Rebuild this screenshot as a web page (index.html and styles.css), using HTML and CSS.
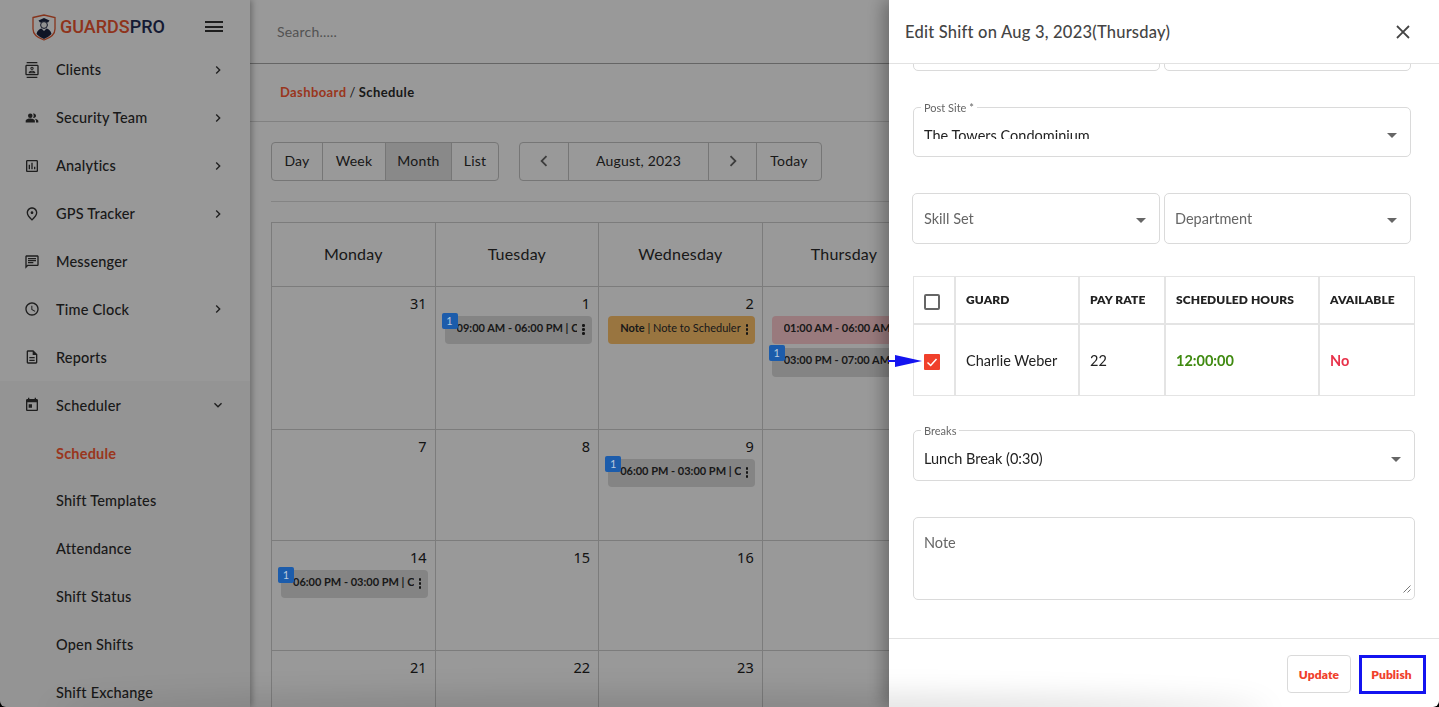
FILE: index.html
```html
<!DOCTYPE html>
<html lang="en">
<head>
<meta charset="utf-8">
<title>Schedule</title>
<link rel="stylesheet" href="styles.css">
</head>
<body>
<div class="app">
  <aside class="sidebar">
    <div class="brand">
      <svg class="logo" viewBox="0 0 24 27"><path d="M1 3.500 12 1l11 2.500V15c0 5-5 9-11 11C6 24 1 20 1 15z" fill="#fff" stroke="#e0572f" stroke-width="1.300"/><path d="M6.500 6.500 12 4l5.500 2.500-1.500 2H8z" fill="#1c2340"/><circle cx="12" cy="11" r="3.400" fill="#f2f2f2" stroke="#1c2340"/><path d="M4.500 20c.5-3.500 3-5 5-5.500L12 17l2.500-2.500c2 .5 4.500 2 5 5.500-2 2.300-5 4-7.500 5-2.500-1-5.500-2.700-7.500-5z" fill="#1c2340"/></svg>
      <span class="wordmark"><span class="wm-a">GUARDS</span><span class="wm-b">PRO</span></span>
      <span class="burger"><i></i><i></i><i></i></span>
    </div>
    <nav class="nav">
      <a class="item"><svg class="ico" viewBox="0 0 24 24"><path d="M20 0H4v2h16V0zM4 24h16v-2H4v2zM20 4H4c-1.100 0-2 .9-2 2v12c0 1.100.9 2 2 2h16c1.100 0 2-.9 2-2V6c0-1.100-.9-2-2-2zm0 14H4V6h16v12zm-8-6c1.380 0 2.500-1.120 2.500-2.500S13.380 7 12 7 9.500 8.120 9.500 9.500 10.620 12 12 12zm0-3.500c.55 0 1 .45 1 1s-.45 1-1 1-1-.45-1-1 .45-1 1-1zm5 7.490c0-2.090-3.310-2.990-5-2.990s-5 .9-5 2.990V17h10v-1.010zM8.810 15.500c.61-.52 2.030-1 3.190-1 1.170 0 2.590.48 3.200 1H8.810z"/></svg><span class="lbl">Clients</span><svg class="chev" viewBox="0 0 24 24"><path d="M10 6 8.590 7.410 13.170 12l-4.580 4.590L10 18l6-6z"/></svg></a>
      <a class="item"><svg class="ico team" viewBox="0 0 24 24"><circle cx="9" cy="8" r="4"/><path d="M15 12c2.210 0 4-1.790 4-4s-1.790-4-4-4c-.47 0-.91.1-1.330.24C14.500 5.270 15 6.580 15 8s-.5 2.730-1.330 3.760c.42.14.86.24 1.330.24zM9 13c-2.670 0-8 1.340-8 4v3h16v-3c0-2.660-5.330-4-8-4zM16.670 13.130C18.040 14.060 19 15.320 19 17v3h4v-3c0-2.180-3.570-3.470-6.330-3.870z"/></svg><span class="lbl">Security Team</span><svg class="chev" viewBox="0 0 24 24"><path d="M10 6 8.590 7.410 13.170 12l-4.580 4.590L10 18l6-6z"/></svg></a>
      <a class="item"><svg class="ico" viewBox="0 0 24 24"><path d="M9 17H7v-7h2v7zm4 0h-2V7h2v10zm4 0h-2v-4h2v4zm2 2H5V5h14v14zm0-16H5c-1.100 0-2 .9-2 2v14c0 1.100.9 2 2 2h14c1.100 0 2-.9 2-2V5c0-1.100-.9-2-2-2z"/></svg><span class="lbl">Analytics</span><svg class="chev" viewBox="0 0 24 24"><path d="M10 6 8.590 7.410 13.170 12l-4.580 4.590L10 18l6-6z"/></svg></a>
      <a class="item"><svg class="ico" viewBox="0 0 24 24"><path d="M12 12c-1.100 0-2-.9-2-2s.9-2 2-2 2 .9 2 2-.9 2-2 2zm6-1.800C18 6.570 15.350 4 12 4s-6 2.570-6 6.200c0 2.340 1.950 5.440 6 9.140 4.050-3.700 6-6.800 6-9.140zM12 2c4.200 0 8 3.220 8 8.200 0 3.320-2.670 7.250-8 11.800-5.330-4.550-8-8.480-8-11.800C4 5.220 7.800 2 12 2z"/></svg><span class="lbl">GPS Tracker</span><svg class="chev" viewBox="0 0 24 24"><path d="M10 6 8.590 7.410 13.170 12l-4.580 4.590L10 18l6-6z"/></svg></a>
      <a class="item"><svg class="ico" viewBox="0 0 24 24"><path d="M20 2H4c-1.100 0-2 .9-2 2v18l4-4h14c1.100 0 2-.9 2-2V4c0-1.100-.9-2-2-2zm0 14H5.170L4 17.170V4h16v12zM6 12h8v2H6zM6 9h12v2H6zM6 6h12v2H6z"/></svg><span class="lbl">Messenger</span></a>
      <a class="item"><svg class="ico" viewBox="0 0 24 24"><path d="M11.990 2C6.470 2 2 6.480 2 12s4.470 10 9.990 10C17.520 22 22 17.520 22 12S17.520 2 11.990 2zM12 20c-4.420 0-8-3.580-8-8s3.580-8 8-8 8 3.580 8 8-3.580 8-8 8zm.5-13H11v6l5.250 3.150.75-1.230-4.500-2.670z"/></svg><span class="lbl">Time Clock</span><svg class="chev" viewBox="0 0 24 24"><path d="M10 6 8.590 7.410 13.170 12l-4.580 4.590L10 18l6-6z"/></svg></a>
      <a class="item"><svg class="ico" viewBox="0 0 24 24"><path d="M8 16h8v2H8zm0-4h8v2H8zm6-10H6c-1.100 0-2 .9-2 2v16c0 1.100.89 2 1.990 2H18c1.100 0 2-.9 2-2V8l-6-6zm4 18H6V4h7v5h5v11z"/></svg><span class="lbl">Reports</span></a>
      <div class="group">
        <a class="item"><svg class="ico" viewBox="0 0 24 24"><path d="M7 11h5v5H7zM16 1v2H8V1H6v2H5c-1.110 0-1.990.9-1.990 2L3 19c0 1.100.89 2 2 2h14c1.100 0 2-.9 2-2V5c0-1.100-.9-2-2-2h-1V1h-2zm3 18H5V8h14v11z"/></svg><span class="lbl">Scheduler</span><svg class="chev" viewBox="0 0 24 24"><path d="M16.590 8.590 12 13.170 7.410 8.590 6 10l6 6 6-6z"/></svg></a>
        <a class="item sub active"><span class="lbl">Schedule</span></a>
        <a class="item sub"><span class="lbl">Shift Templates</span></a>
        <a class="item sub"><span class="lbl">Attendance</span></a>
        <a class="item sub"><span class="lbl">Shift Status</span></a>
        <a class="item sub"><span class="lbl">Open Shifts</span></a>
        <a class="item sub"><span class="lbl">Shift Exchange</span></a>
      </div>
    </nav>
  </aside>
  <main class="main">
    <header class="topbar"><span class="search">Search.....</span></header>
    <div class="crumbs"><b class="crumb-link">Dashboard</b><span class="crumb-sep">/</span><b>Schedule</b></div>
    <section class="content">
      <div class="toolbar">
        <div class="btns">
          <span class="btn w-day">Day</span><span class="btn w-week">Week</span><span class="btn w-month on">Month</span><span class="btn w-list">List</span>
        </div>
        <div class="btns">
          <span class="btn w-prev"><svg class="nav-ico" viewBox="0 0 24 24"><path d="M15.410 7.410 14 6l-6 6 6 6 1.410-1.410L10.830 12z"/></svg></span><span class="btn w-label">August, 2023</span><span class="btn w-next"><svg class="nav-ico" viewBox="0 0 24 24"><path d="M10 6 8.590 7.410 13.170 12l-4.580 4.590L10 18l6-6z"/></svg></span><span class="btn w-today">Today</span>
        </div>
      </div>
      <hr class="rule">
      <div class="cal">
        <div class="dow">Monday</div><div class="dow">Tuesday</div><div class="dow">Wednesday</div><div class="dow">Thursday</div><div class="dow">Friday</div><div class="dow">Saturday</div><div class="dow">Sunday</div>

        <div class="day"><span class="num">31</span></div>
        <div class="day"><span class="num">1</span>
          <div class="ev grey"><span class="badge">1</span><span class="ev-text">09:00 AM - 06:00 PM | Charlie Weber</span><span class="dots"><i></i><i></i><i></i></span></div>
        </div>
        <div class="day"><span class="num">2</span>
          <div class="ev note"><span class="ev-text"><b>Note</b> | Note to Scheduler</span><span class="dots"><i></i><i></i><i></i></span></div>
        </div>
        <div class="day"><span class="num">3</span>
          <div class="ev pink"><span class="ev-text">01:00 AM - 06:00 AM | Charlie Weber</span></div>
          <div class="ev grey tall"><span class="badge">1</span><span class="ev-text">03:00 PM - 07:00 AM | Charlie Weber</span></div>
        </div>
        <div class="day"><span class="num">4</span></div><div class="day"><span class="num">5</span></div><div class="day"><span class="num">6</span></div>

        <div class="day"><span class="num">7</span></div>
        <div class="day"><span class="num">8</span></div>
        <div class="day"><span class="num">9</span>
          <div class="ev grey"><span class="badge">1</span><span class="ev-text">06:00 PM - 03:00 PM | Charlie Weber</span><span class="dots"><i></i><i></i><i></i></span></div>
        </div>
        <div class="day"><span class="num">10</span></div><div class="day"><span class="num">11</span></div><div class="day"><span class="num">12</span></div><div class="day"><span class="num">13</span></div>

        <div class="day"><span class="num">14</span>
          <div class="ev grey"><span class="badge">1</span><span class="ev-text">06:00 PM - 03:00 PM | Charlie Weber</span><span class="dots"><i></i><i></i><i></i></span></div>
        </div>
        <div class="day"><span class="num">15</span></div>
        <div class="day"><span class="num">16</span></div>
        <div class="day"><span class="num">17</span></div><div class="day"><span class="num">18</span></div><div class="day"><span class="num">19</span></div><div class="day"><span class="num">20</span></div>

        <div class="day"><span class="num">21</span></div>
        <div class="day"><span class="num">22</span></div>
        <div class="day"><span class="num">23</span></div>
        <div class="day"><span class="num">24</span></div><div class="day"><span class="num">25</span></div><div class="day"><span class="num">26</span></div><div class="day"><span class="num">27</span></div>
      </div>
    </section>
  </main>
</div>

<div class="scrim"></div>

<aside class="drawer">
  <header class="d-head">
    <h2 class="d-title">Edit Shift on Aug 3, 2023(Thursday)</h2>
    <svg class="d-close" viewBox="0 0 14 14"><path d="M1 1l12 12M13 1 1 13"/></svg>
  </header>
  <div class="d-body">
    <div class="row-top"><div class="box half"></div><div class="box half"></div></div>
    <div class="box post">
      <span class="float">Post Site *</span>
      <span class="clip"><span class="value">The Towers Condominium</span></span>
      <span class="caret"></span>
    </div>
    <div class="row-two">
      <div class="box half skill"><span class="hint">Skill Set</span><span class="caret low"></span></div>
      <div class="box half"><span class="hint">Department</span><span class="caret low"></span></div>
    </div>
    <table class="guards">
      <thead>
        <tr><th class="c1"><span class="check"></span></th><th class="c2">GUARD</th><th class="c3">PAY RATE</th><th class="c4">SCHEDULED HOURS</th><th class="c5">AVAILABLE</th></tr>
      </thead>
      <tbody>
        <tr><td><span class="check checked"><svg viewBox="0 0 16 16"><path d="M3.500 8.500 6.700 11.500 12.500 5"/></svg></span></td><td>Charlie Weber</td><td>22</td><td class="hours">12:00:00</td><td class="no">No</td></tr>
      </tbody>
    </table>
    <div class="box wide breaks">
      <span class="float">Breaks</span>
      <span class="value">Lunch Break (0:30)</span>
      <span class="caret"></span>
    </div>
    <div class="box wide note-box">
      <span class="hint">Note</span>
      <svg class="grip" viewBox="0 0 8 8"><path d="M7.500 .5 .5 7.500M7.500 4.500l-3 3"/></svg>
    </div>
  </div>
  <footer class="d-foot">
    <span class="act">Update</span>
    <span class="act hl">Publish</span>
  </footer>
</aside>

<svg class="pointer" viewBox="0 0 34 14"><path d="M0 6h7L7 1l27 6-27 6V8H0z" fill="#1414f0"/></svg>
<div class="edge-fade"></div>
<div class="frame"></div>
</body>
</html>
```
FILE: styles.css
```css
* { box-sizing: border-box; }
html, body { margin: 0; height: 100%; overflow: hidden; }
body { font-family: "Lato", "Open Sans", sans-serif; font-size: 14.5px; letter-spacing: .2px; color: #2b2b2b; background: #fff; }
a { color: inherit; }

.app { display: flex; height: 707px; overflow: hidden; }

.sidebar { width: 250px; flex: none; background: #fdfdfd; box-shadow: 2px 0 6px rgba(0,0,0,.3); z-index: 2; overflow: hidden; display: flex; flex-direction: column; }
.brand { height: 46px; flex: none; display: flex; align-items: center; padding: 7px 27px 0 32px; }
.logo { width: 24px; height: 27px; flex: none; margin-top: 1px; }
.wordmark { font-family: "Roboto", sans-serif; font-size: 18px; font-weight: 500; letter-spacing: 0; margin-left: 4px; line-height: 1; }
.wm-a { color: #ef5530; }
.wm-b { color: #232c55; }
.burger { margin-left: auto; width: 18px; display: flex; flex-direction: column; gap: 2.500px; }
.burger i { display: block; height: 2px; background: #333; }
.nav { flex: none; }
.item { display: flex; align-items: center; height: 47.900px; padding: 0 24px; font-weight: 500; }
.ico { width: 16px; height: 16px; fill: #333; flex: none; margin-right: 16px; }
.team { transform: scale(.86); }
.chev { width: 16px; height: 16px; fill: #333; margin-left: auto; flex: none; }
.group { background: #f7f7f7; }
.sub { padding-left: 56px; }
.active { color: #ff5a33; font-weight: 700; }

.main { flex: 1; min-width: 0; display: flex; flex-direction: column; }
.topbar { height: 64px; flex: none; display: flex; align-items: center; padding-left: 27px; border-bottom: 1px solid #a9a9a9; }
.search { color: #8a8a8a; font-size: 14px; }
.crumbs { height: 58px; flex: none; display: flex; align-items: center; gap: 3px; padding: 0 0 2px 30px; border-bottom: 1px solid #d8d8d8; font-size: 13px; letter-spacing: .4px; }
.crumb-link { color: #ff5a33; }
.content { padding: 20px 0 0 21px; flex: 1; min-height: 0; }
.toolbar { display: flex; gap: 20px; }
.btns { display: flex; height: 39px; border: 1px solid #c5c5c5; border-radius: 4px; overflow: hidden; }
.btn { display: flex; align-items: center; justify-content: center; border-right: 1px solid #c5c5c5; font-size: 14px; padding-bottom: 2px; }
.btn:last-child { border-right: 0; }
.w-day { width: 51px; } .w-week { width: 63px; } .w-month { width: 66px; } .w-list { width: 46px; }
.w-prev { width: 49px; } .w-label { width: 140px; } .w-next { width: 48px; } .w-today { width: 64px; }
.on { background: #e4e4e4; }
.nav-ico { width: 22px; height: 22px; fill: #666; }
.rule { margin: 20px 0 20px; border: 0; border-top: 1px solid #dcdcdc; }
.cal { display: grid; width: 1146px; grid-template-columns: repeat(7, minmax(0, 1fr)); grid-template-rows: 64px 143px 111px 110px 60px; border-top: 1px solid #cfcfcf; border-left: 1px solid #cfcfcf; }
.dow { display: flex; align-items: center; justify-content: center; font-size: 16px; padding-bottom: 2px; border-right: 1px solid #cfcfcf; border-bottom: 1px solid #cfcfcf; }
.day { position: relative; padding: 6px 8px 0 9px; border-right: 1px solid #cfcfcf; border-bottom: 1px solid #cfcfcf; display: flex; flex-direction: column; }
.num { align-self: flex-end; font-family: "Noto Sans", sans-serif; font-size: 14.500px; letter-spacing: 0; line-height: 20px; color: #222; }
.ev { position: relative; display: flex; align-items: flex-start; flex: none; width: 147px; height: 28px; margin-top: 3px; padding: 4px 7px 0 12px; border-radius: 4px; font-size: 11px; letter-spacing: 0; font-weight: 700; line-height: 15px; }
.ev.tall { height: 29px; margin-top: 4px; }
.grey { background: #dcdcdc; }
.note { background: #ffc36b; font-weight: 400; }
.pink { background: #ffccd0; }
.ev-text { flex: 1; min-width: 0; overflow: hidden; white-space: nowrap; }
.dots { flex: none; display: flex; flex-direction: column; gap: 1.500px; margin: 4px 0 0 5px; }
.dots i { width: 2.500px; height: 2.500px; background: #222; border-radius: 50%; }
.note .dots { margin-left: 2px; }
.badge { position: absolute; left: -3px; top: -3px; width: 16px; height: 16px; border-radius: 2px; background: #1c5cab; color: #b9c9dd; font-weight: 400; font-size: 11px; text-align: center; line-height: 16px; z-index: 6; }

.scrim { position: fixed; inset: 0; background: rgba(0,0,0,.4); z-index: 5; }

.drawer { position: fixed; top: 0; bottom: 0; left: 889px; right: 0; background: #fff; z-index: 6; display: flex; flex-direction: column; box-shadow: -6px 0 16px rgba(0,0,0,.3); overflow: hidden; letter-spacing: 0; }
.d-head { height: 64px; flex: none; display: flex; align-items: center; padding: 0 29px 0 16px; border-bottom: 1px solid #e2e2e2; background: #fff; position: relative; z-index: 1; }
.d-title { margin: 0; font-size: 16.500px; font-weight: 500; color: #444; letter-spacing: .22px; }
.d-close { width: 14px; height: 14px; margin-left: auto; fill: none; stroke: #444; stroke-width: 1.800; }
.d-body { flex: 1; min-height: 0; padding: 0 24px; overflow: hidden; }
.box { position: relative; border: 1px solid #dadada; border-radius: 5px; display: flex; align-items: center; padding: 0 10px; }
.half { width: 247px; height: 51px; }
.row-top { display: flex; gap: 4px; margin-top: -44px; height: 50px; }
.post { width: 498px; height: 50px; margin-top: 37px; align-items: flex-start; }
.float { position: absolute; left: 7px; top: -6px; padding: 0 3px; background: #fff; font-size: 11px; color: #666; line-height: 12px; }
.clip { display: block; margin-top: 18px; height: 13px; overflow: hidden; line-height: 20px; }
.value { color: #222; font-size: 14.500px; }
.caret { position: absolute; right: 13px; top: 50%; margin-top: 1px; border: 5px solid transparent; border-top: 5px solid #666; border-bottom: 0; }
.caret.low { top: 24px; margin-top: 0; }
.row-two { display: flex; gap: 4px; margin: 36px 0 0 -1px; }
.row-two .skill { width: 248px; padding-left: 11px; }
.hint { color: #666; }
.guards { margin-top: 32px; width: 502px; border-collapse: separate; border-spacing: 0; table-layout: fixed; }
.guards th, .guards td { border: 1px solid #e4e4e4; padding: 0 10px; text-align: left; }
.guards th { height: 48px; padding-bottom: 2px; font-size: 12px; font-weight: 800; color: #222; letter-spacing: .1px; }
.guards td { height: 72px; padding-top: 1px; color: #222; }
.c1 { width: 42px; } .c2 { width: 124px; } .c3 { width: 86px; } .c4 { width: 154px; }
.check { display: block; width: 16px; height: 16px; margin-top: 6px; border: 2px solid #666; border-radius: 2px; }
.checked { border: 0; background: #f0402b; border-radius: 1px; margin-top: 3px; }
.checked svg { display: block; fill: none; stroke: #fff; stroke-width: 1.500; }
.hours { color: #3f8a10 !important; font-weight: 700; }
.no { color: #e8324a !important; font-weight: 700; }
.wide { width: 502px; }
.breaks { height: 51px; margin-top: 34px; padding-top: 5px; }
.note-box { height: 83px; margin-top: 36px; align-items: flex-start; padding-top: 16px; }
.grip { position: absolute; right: 3px; bottom: 6px; width: 8px; height: 8px; fill: none; stroke: #555; stroke-width: .8; }
.d-foot { height: 69px; flex: none; display: flex; justify-content: flex-end; align-items: flex-start; gap: 8px; padding: 16px 13px 0 0; border-top: 1px solid #e2e2e2; }
.act { display: flex; align-items: center; justify-content: center; width: 64px; height: 38px; border: 1px solid #dadada; border-radius: 4px; color: #f0402b; font-size: 12px; font-weight: 800; background: #fff; letter-spacing: .1px; position: relative; z-index: 1; }
.hl { width: 67px; height: 39px; padding-right: 2px; border: 3px solid #1414f0; border-radius: 0; }

.pointer { position: fixed; left: 888px; top: 354px; width: 34px; height: 14px; z-index: 7; }
.edge-fade { position: fixed; left: 60px; right: 180px; bottom: -14px; height: 14px; border-radius: 50%; box-shadow: 0 -2px 30px 10px rgba(0,0,0,.13); z-index: 7; pointer-events: none; }
.frame { position: fixed; inset: 0; border-radius: 0 0 6px 6px; box-shadow: 0 0 0 10px #000; z-index: 8; pointer-events: none; }
```
